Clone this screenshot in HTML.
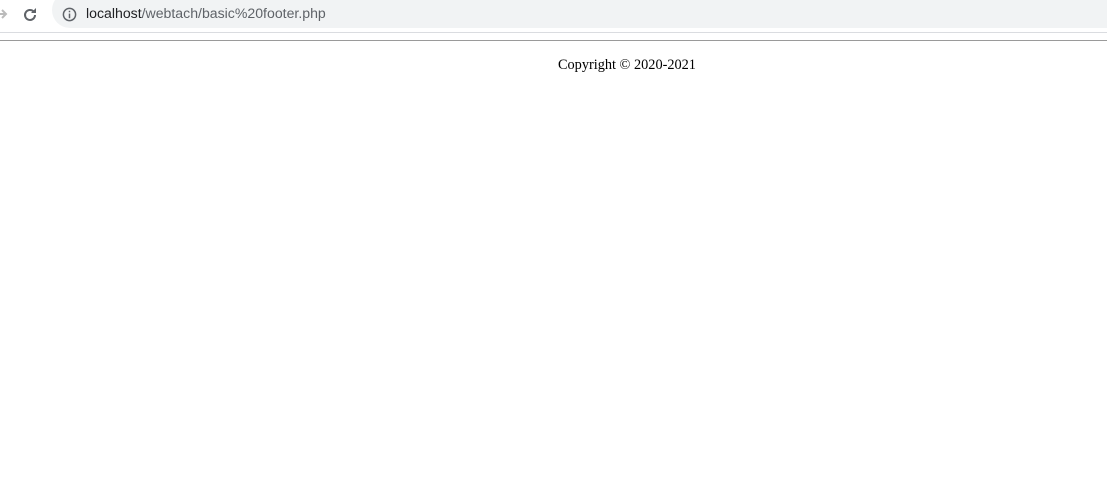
<!DOCTYPE html>
<html><head><style>
body{margin:0;width:1107px;height:482px;background:#fff;position:relative;overflow:hidden}
.bar{position:absolute;left:52px;top:-8px;width:1080px;height:36px;background:#f1f3f4;border-radius:18px}
.url{position:absolute;left:86px;top:5px;font:14.1px "Liberation Sans",sans-serif;color:#5f6368}
.url b{font-weight:normal;color:#202124}
.l1{position:absolute;left:0;top:32px;width:1107px;height:1px;background:#dadce0}
.hr{position:absolute;left:0;top:40px;width:1107px;height:1px;background:#9a9a9a}
.c{position:absolute;left:558px;top:57px;font:14.3px "Liberation Serif",serif;color:#000;white-space:nowrap}
</style></head><body>
<svg style="position:absolute;left:0;top:6px" width="8" height="16"><path d="M0 8h5M2 4l4 4-4 4" stroke="#bbb" stroke-width="2" fill="none"/></svg>
<svg style="position:absolute;left:21px;top:6px" width="18" height="18" viewBox="0 0 18 18"><path d="M14 9a5 5 0 1 1-1.5-3.6" stroke="#5f6368" stroke-width="2" fill="none"/><path d="M15 2v5h-5z" fill="#5f6368"/></svg>
<div class="bar"></div>
<svg style="position:absolute;left:62px;top:7px" width="15" height="15" viewBox="0 0 16 16"><circle cx="8" cy="8" r="6.5" stroke="#5f6368" stroke-width="1.6" fill="none"/><rect x="7.2" y="7" width="1.6" height="5" fill="#5f6368"/><rect x="7.2" y="4" width="1.6" height="1.6" fill="#5f6368"/></svg>
<div class="url"><b>localhost</b>/webtach/basic%20footer.php</div>
<div class="l1"></div><div class="hr"></div>
<div class="c">Copyright © 2020-2021</div>
</body></html>
